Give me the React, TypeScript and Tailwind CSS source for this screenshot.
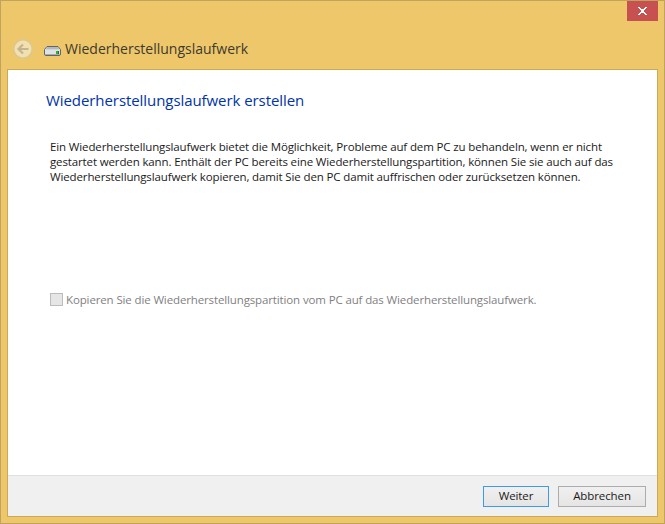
const font = "font-['Open_Sans','Noto_Sans',sans-serif]";

const DriveIcon = () => (
  <svg width="17" height="10" viewBox="0 0 17 10" className="shrink-0">
    <path d="M3 0.5 H14 L16.5 3.5 V8 Q16.5 9.5 15 9.5 H2 Q0.5 9.5 0.5 8 V3.5 Z" fill="#e9ebec" stroke="#5f666b" />
    <path d="M3.5 1 H13.5 L15.5 3.5 H1.5 Z" fill="#b4b9bc" />
    <rect x="1" y="4" width="15" height="5" fill="#dfe2e4" />
    <rect x="1" y="8" width="15" height="1" fill="#a5abaf" />
    <rect x="12" y="5" width="2" height="3" fill="#2fb52a" />
    <rect x="14" y="5" width="1" height="3" fill="#4c5256" />
  </svg>
);

const BackButton = () => (
  <svg width="20" height="20" viewBox="0 0 20 20" className="shrink-0">
    <circle cx="10" cy="10" r="9.25" fill="#f3e0ae" stroke="#d9c793" strokeWidth="1.5" />
    <path d="M15.5 10 H6 M10 5.5 L5.5 10 L10 14.5" fill="none" stroke="#c2b592" strokeWidth="2.2" />
  </svg>
);

const CloseGlyph = () => (
  <svg width="9" height="8" viewBox="0 0 9 8" shapeRendering="crispEdges">
    <path d="M0 0 H2 V1 H3 V2 H6 V1 H7 V0 H9 V1 H8 V2 H7 V3 H6 V5 H7 V6 H8 V7 H9 V8 H7 V7 H6 V6 H3 V7 H2 V8 H0 V7 H1 V6 H2 V5 H3 V3 H2 V2 H1 V1 H0 Z" fill="#fff" />
  </svg>
);

export default function App() {
  return (
    <div className={`${font} flex h-[524px] w-[665px] flex-col border border-[#bfa35f] bg-[#eec76b] text-[#1a1a1a]`}>
      <div className="flex h-5 shrink-0 justify-end pr-[6px]">
        <button className="flex h-5 w-[31px] items-center justify-center bg-[#c75050]">
          <CloseGlyph />
        </button>
      </div>

      <div className="flex h-12 shrink-0 items-center pl-3 pt-[8px]">
        <BackButton />
        <div className="ml-[11px] mt-[4px]">
          <DriveIcon />
        </div>
        <span className="ml-1 text-[14px] leading-5 text-[#3d3a2e]">Wiederherstellungslaufwerk</span>
      </div>

      <div className="mx-[6px] mb-[6px] flex min-h-0 flex-1 flex-col border border-[#c9a95a] bg-white">
        <div className="flex-1 pl-[38px] pr-6 pt-[20px]">
          <h1 className="text-[15px] font-normal leading-5 tracking-[-0.07px] text-[#0033a8]">Wiederherstellungslaufwerk erstellen</h1>
          <p className="ml-[4px] mt-[29px] whitespace-nowrap text-[11.5px] leading-[15px] tracking-[-0.13px] text-[#1a1a1a]">
            Ein Wiederherstellungslaufwerk bietet die Möglichkeit, Probleme auf dem PC zu behandeln, wenn er nicht
            <br />
            gestartet werden kann. Enthält der PC bereits eine Wiederherstellungspartition, können Sie sie auch auf das
            <br />
            Wiederherstellungslaufwerk kopieren, damit Sie den PC damit auffrischen oder zurücksetzen können.
          </p>
          <label className="ml-[4px] mt-[108px] flex items-center gap-[3px]">
            <span className="h-[13px] w-[13px] shrink-0 border border-[#bcbcbc] bg-[#e6e6e6]" />
            <span className="whitespace-nowrap text-[11.5px] leading-[15px] tracking-[-0.13px] text-[#7f7f7f]">
              Kopieren Sie die Wiederherstellungspartition vom PC auf das Wiederherstellungslaufwerk.
            </span>
          </label>
        </div>

        <div className="flex h-[41px] shrink-0 items-center justify-end gap-[9px] border-t border-[#dfdfdf] bg-[#f0f0f0] pr-[11px]">
          <button className="h-[21px] w-[66px] border border-[#3c9bee] bg-gradient-to-b from-[#f0f0f0] to-[#e5e5e5] text-[11.5px] leading-none tracking-[-0.1px] text-[#1a1a1a]">
            Weiter
          </button>
          <button className="h-[21px] w-[88px] border border-[#acacac] bg-gradient-to-b from-[#f0f0f0] to-[#e5e5e5] text-[11.5px] leading-none tracking-[-0.1px] text-[#1a1a1a]">
            Abbrechen
          </button>
        </div>
      </div>
    </div>
  );
}
